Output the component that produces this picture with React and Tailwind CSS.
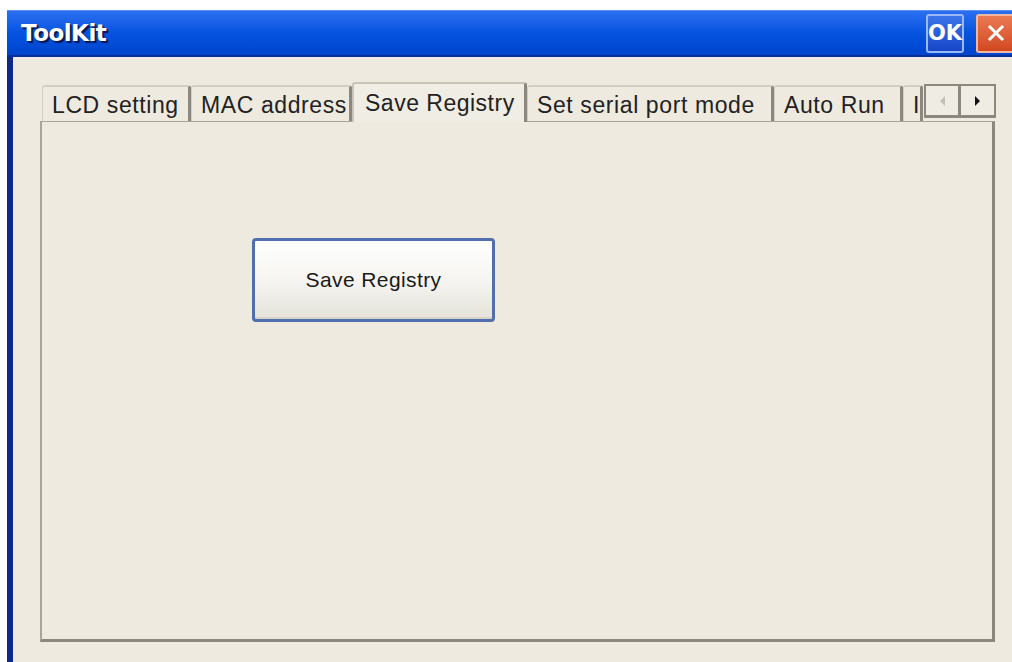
import { useState } from 'react';

// Tabs of the ToolKit dialog, with the pixel widths of the CE tab strip
const TABS = [
  { label: 'LCD setting', w: 149 },
  { label: 'MAC address', w: 161 },
  { label: 'Save Registry', w: 175 },
  { label: 'Set serial port mode', w: 247 },
  { label: 'Auto Run', w: 129 },
  { label: 'I', w: 20 },
];

const App = () => {
  const [active, setActive] = useState(2);

  return (
    <div
      className="w-[1012px] h-[662px] bg-white pt-[10px] pl-[7px] flex flex-col overflow-hidden"
      style={{ fontFamily: '"Liberation Sans", Arial, sans-serif' }}
    >
      {/* Title bar */}
      <div className="h-[47px] flex items-center pl-[14px] border-t border-[#5a8ef0] border-b-2 border-b-[#0a2f9a] bg-gradient-to-b from-[#2a6ff0] via-[#0553e0] to-[#0045cc]">
        <span
          className="text-white font-bold text-[23px] tracking-[-0.5px] flex-1"
          style={{ fontFamily: '"DejaVu Sans", sans-serif', textShadow: '1px 1px 0 #0a1850, 2px 2px 1px #0a1850' }}
        >
          ToolKit
        </span>
        <button
          className="w-[38px] h-[39px] mr-[12px] rounded-[3px] border-2 border-[#9cb8f4] bg-gradient-to-b from-[#3a74ea] to-[#1846c8] text-white font-bold text-[21px] leading-none flex items-center justify-center"
          style={{ fontFamily: '"DejaVu Sans", sans-serif' }}
        >
          OK
        </button>
        <button className="w-[38px] h-[39px] -mr-[2px] rounded-l-[3px] border-2 border-r-0 border-[#f0b8a0] bg-gradient-to-b from-[#ea7a52] to-[#d2471e] flex items-center justify-center">
          <svg width="18" height="18" viewBox="0 0 18 18">
            <path d="M3 3 L15 15 M15 3 L3 15" stroke="#fff" strokeWidth="3" strokeLinecap="square" />
          </svg>
        </button>
      </div>

      {/* Client area */}
      <div className="flex-1 flex flex-col bg-[#eeeae0] border-l-[6px] border-[#0c2c84] pl-[27px] pt-[24px]">
        {/* Tab strip */}
        <div className="h-[40px] flex items-end relative z-10">
          <div className="flex items-end ml-[2px]">
            {TABS.map((t, i) => {
              const sel = i === active;
              return (
                <div
                  key={t.label}
                  onClick={() => setActive(i)}
                  style={{ width: t.w }}
                  className={
                    sel
                      ? 'h-[40px] -mb-[1px] bg-[#f0ede4] border-t-2 border-l-2 border-[#c8c4b8] border-r-[3px] border-r-[#8c8880] rounded-t-[3px] flex items-center pl-[11px] text-[23px] tracking-[0.5px] text-[#222] whitespace-nowrap overflow-hidden cursor-default'
                      : 'h-[36px] border-t-2 border-l border-[#d2cec4] border-r-[3px] border-r-[#8c8880] rounded-t-[3px] flex items-center pl-[9px] pt-[2px] text-[23px] tracking-[0.6px] text-[#222] whitespace-nowrap overflow-hidden cursor-default'
                  }
                >
                  {t.label}
                </div>
              );
            })}
          </div>
          {/* Tab scroll arrows */}
          <div className="ml-[1px] mb-[3px] h-[34px] flex border-2 border-[#8c8880] border-b-[3px] bg-[#efece3]">
            <div className="w-[35px] flex items-center justify-center border-r-[3px] border-[#8c8880]">
              <svg width="8" height="12" viewBox="0 0 8 12">
                <path d="M7 1 L2 6 L7 11 Z" fill="#c4c0b6" />
              </svg>
            </div>
            <div className="w-[33px] flex items-center justify-center">
              <svg width="8" height="12" viewBox="0 0 8 12">
                <path d="M1 1 L6 6 L1 11 Z" fill="#111" />
              </svg>
            </div>
          </div>
        </div>

        {/* Tab page */}
        <div className="w-[955px] h-[521px] border-l-2 border-t border-[#a8a49a] border-r-[3px] border-b-[3px] border-r-[#8c8880] border-b-[#8c8880] pl-[210px] pt-[116px]">
          <button className="w-[243px] h-[84px] rounded-[4px] border-[3px] border-[#4f6fae] bg-gradient-to-b from-[#ffffff] via-[#f6f5f1] to-[#e4e2da] text-[21px] tracking-[0.4px] text-[#1a1a1a] shadow-[inset_0_-2px_0_#d6d2c6]">
            Save Registry
          </button>
        </div>
      </div>
    </div>
  );
};

export default App;
